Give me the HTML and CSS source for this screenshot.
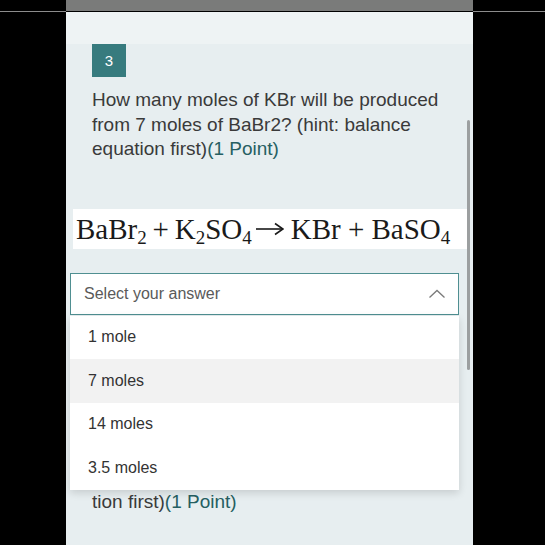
FILE: index.html
```html
<!DOCTYPE html>
<html>
<head>
<meta charset="utf-8">
<link rel="stylesheet" href="styles.css">
</head>
<body>
<div class="topbar">
  <div class="side"></div>
  <div class="mid"></div>
  <div class="side"></div>
</div>
<div class="column">
  <div class="scrollbar"></div>
  <div class="card">
    <div class="badge">3</div>
    <p class="question"><span>How many moles of KBr will be produced from 7 moles of BaBr2? (hint: balance equation first)</span><span class="points">(1 Point)</span></p>
    <div class="equation">BaBr<sub>2</sub>&#8201;+&#8201;K<sub>2</sub>SO<sub>4</sub><svg class="arrow" width="29" height="14" viewBox="0 0 29 14"><line x1="1" y1="7" x2="27" y2="7" stroke="#1a1a1a" stroke-width="1.6"/><polyline points="20,1.5 28,7 20,12.5" fill="none" stroke="#1a1a1a" stroke-width="1.6"/></svg>KBr + BaSO<sub>4</sub></div>
    <div class="select-wrap">
      <div class="select">
        <span class="placeholder">Select your answer</span>
        <svg class="chevron" width="18" height="10" viewBox="0 0 18 10"><polyline points="1.5,8.5 9,1.5 16.5,8.5" fill="none" stroke="#7a7a7a" stroke-width="1.3"/></svg>
      </div>
      <ul class="menu">
        <li class="option">1 mole</li>
        <li class="option hover">7 moles</li>
        <li class="option">14 moles</li>
        <li class="option">3.5 moles</li>
      </ul>
    </div>
    <p class="question under"><span>tion first)</span><span class="points">(1 Point)</span></p>
  </div>
</div>
</body>
</html>
```

FILE: styles.css
```css
* { box-sizing: border-box; }
html, body { margin: 0; padding: 0; }
body {
  background: #000;
  width: 545px;
  height: 545px;
  overflow: hidden;
  font-family: "Liberation Sans", Arial, sans-serif;
}
.topbar {
  display: grid;
  grid-template-columns: 66px 407px 1fr;
  height: 12px;
}
.topbar .side {
  border-bottom: 1px solid #8c8c8c;
  background: #000;
}
.topbar .mid {
  background: #7a7b7a;
  height: 11px;
}
.column {
  position: relative;
  margin-left: 66px;
  width: 407px;
  height: 533px;
  background: #eef3f4;
  padding-top: 32px;
}
.card {
  background: #e7eef0;
  height: 100%;
  padding-top: 0;
}
.scrollbar {
  position: absolute;
  left: 401px;
  top: 108px;
  width: 3px;
  height: 250px;
  border-radius: 2px;
  background: #9c9fa0;
}
.badge {
  margin-left: 26px;
  width: 34px;
  height: 33px;
  background: #377b7e;
  color: #fff;
  font-size: 15px;
  display: flex;
  align-items: center;
  justify-content: center;
}
.question {
  margin: 11px 0 0 26px;
  width: 360px;
  font-size: 19px;
  line-height: 24.5px;
  color: #3a3a3a;
}
.points { color: #265f62; }
.equation {
  margin: 47px 0 0 7px;
  width: 394px;
  height: 40px;
  background: #fff;
  font-family: "Liberation Serif", "Times New Roman", serif;
  font-size: 29px;
  line-height: 40px;
  color: #1a1a1a;
  padding-left: 3px;
  white-space: nowrap;
}
.equation sub {
  font-size: 19px;
  vertical-align: -5px;
  line-height: 0;
}
.arrow {
  display: inline-block;
  vertical-align: 3px;
  margin: 0 7px 0 3px;
}
.select-wrap {
  position: relative;
  margin: 24px 0 0 4px;
  width: 389px;
}
.select {
  height: 42px;
  border: 1.5px solid #4f8f91;
  background: #fff;
  display: flex;
  align-items: center;
  justify-content: space-between;
  padding: 0 12px 0 13px;
}
.placeholder {
  font-size: 16px;
  color: #5a5a5a;
}
.chevron { display: block; }
.menu {
  position: absolute;
  left: 0;
  top: calc(100% + 1px);
  width: 389px;
  margin: 0;
  padding: 0;
  list-style: none;
  background: #fff;
  box-shadow: 0 3px 8px rgba(0,0,0,0.14);
  z-index: 2;
}
.option {
  height: 43.5px;
  display: flex;
  align-items: center;
  padding-left: 18px;
  font-size: 16px;
  color: #333;
}
.option.hover { background: #f2f2f2; }
.question.under {
  margin-top: 175px;
}
```
